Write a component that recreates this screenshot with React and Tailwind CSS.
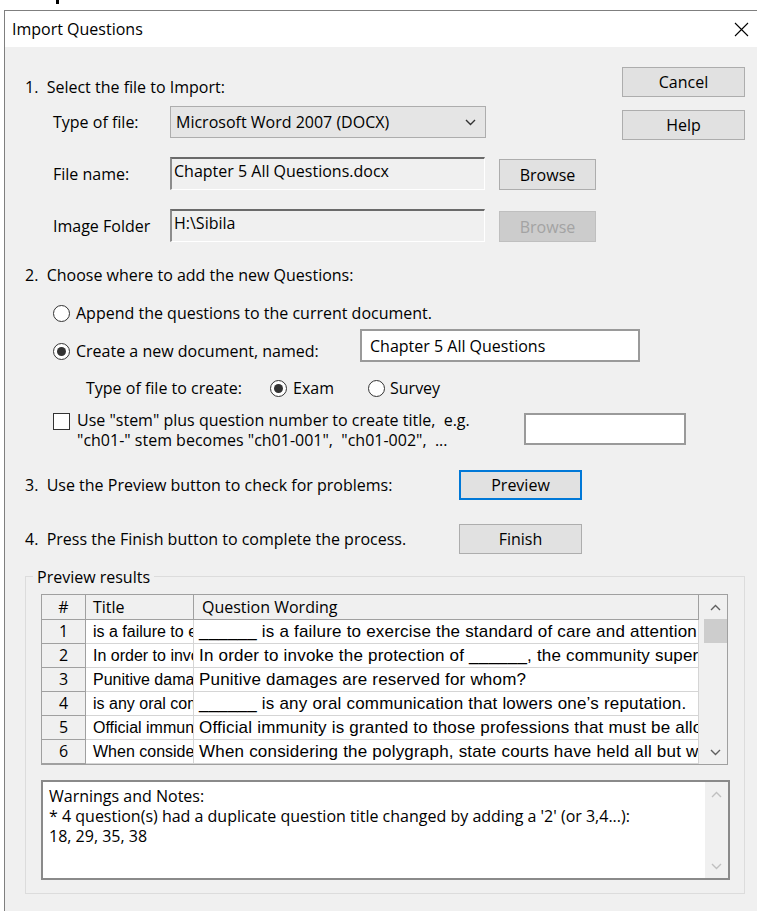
import React from "react";

const rows = [
  ["1", "is a failure to exercise", "______ is a failure to exercise the standard of care and attention to others"],
  ["2", "In order to invoke the protection", "In order to invoke the protection of ______, the community supervisor"],
  ["3", "Punitive damages are reserved", "Punitive damages are reserved for whom?"],
  ["4", "is any oral communication", "______ is any oral communication that lowers one’s reputation."],
  ["5", "Official immunity is granted", "Official immunity is granted to those professions that must be allowed"],
  ["6", "When considering the polygraph", "When considering the polygraph, state courts have held all but which"],
];

function Chevron({ up = false, className = "" }) {
  return (
    <svg width="11" height="7" viewBox="0 0 11 7" className={className}>
      <path
        d={up ? "M1 6 5.5 1.5 10 6" : "M1 1 5.5 5.5 10 1"}
        fill="none"
        stroke="currentColor"
        strokeWidth="1.4"
      />
    </svg>
  );
}

function Btn({ children, className = "", variant = "normal" }) {
  const look =
    variant === "disabled"
      ? "border border-[#bfbfbf] bg-[#cccccc] text-[#a3a3a3]"
      : variant === "focus"
        ? "border-2 border-[#0078d7] bg-[#e1e1e1]"
        : "border border-[#adadad] bg-[#e1e1e1]";
  return (
    <button type="button" className={`flex items-center justify-center ${look} ${className}`}>
      {children}
    </button>
  );
}

function Radio({ checked = false }) {
  return (
    <span className="flex h-[17px] w-[17px] shrink-0 items-center justify-center rounded-full border border-[#333] bg-white">
      {checked && <span className="h-[9px] w-[9px] rounded-full bg-[#333]" />}
    </span>
  );
}

// sunken read-only edit box
function ReadOnlyBox({ value }) {
  return (
    <div className="h-[33px] w-[315px] border-b border-l-2 border-r border-t-2 border-b-white border-l-[#8c8c8c] border-r-white border-t-[#6a6a6a] bg-[#f0f0f0] pl-[2px] pt-[2px] whitespace-nowrap">
      {value}
    </div>
  );
}

export default function App() {
  return (
    <div className="h-[911px] w-[757px] overflow-hidden bg-white font-['Open_Sans',sans-serif] text-[16px] leading-[20px] text-black">
      <div className="h-[10px]">
        <div className="ml-[56px] h-[4px] w-[3px] bg-black" />
      </div>

      <div className="ml-[4px] flex h-[901px] flex-col border-l border-t border-[#7f7f7f]">
        {/* title bar */}
        <div className="flex h-[36px] shrink-0 items-center justify-between bg-white pl-[7px] pr-[8px]">
          <span>Import Questions</span>
          <svg width="15" height="15" viewBox="0 0 15 15">
            <path d="M1 1 14 14M14 1 1 14" stroke="#000" strokeWidth="1.1" />
          </svg>
        </div>

        <div className="flex-1 bg-[#f0f0f0] pl-[20px] pr-[12px]">
          {/* step 1 */}
          <div className="flex justify-between">
            <div>
              <div className="mt-[30px] h-[20px] whitespace-pre">1.  Select the file to Import:</div>

              <div className="mt-[9px] flex h-[32px] items-center pl-[28px]">
                <span className="w-[117px]">Type of file:</span>
                <div className="flex h-[32px] w-[316px] items-center justify-between border border-[#adadad] bg-[#e5e5e5] pl-[5px] pr-[9px]">
                  <span>Microsoft Word 2007 (DOCX)</span>
                  <Chevron className="text-[#333]" />
                </div>
              </div>

              <div className="mt-[19px] flex h-[33px] items-center pl-[28px]">
                <span className="w-[117px]">File name:</span>
                <ReadOnlyBox value="Chapter 5 All Questions.docx" />
                <Btn className="ml-[14px] h-[31px] w-[97px] self-end">Browse</Btn>
              </div>

              <div className="mt-[19px] flex h-[33px] items-center pl-[28px]">
                <span className="w-[117px]">Image Folder</span>
                <ReadOnlyBox value="H:\Sibila" />
                <Btn variant="disabled" className="ml-[14px] h-[31px] w-[97px] self-end">
                  Browse
                </Btn>
              </div>
            </div>

            <div className="flex flex-col pt-[20px]">
              <Btn className="h-[30px] w-[123px]">Cancel</Btn>
              <Btn className="mt-[13px] h-[30px] w-[123px]">Help</Btn>
            </div>
          </div>

          {/* step 2 */}
          <div className="mt-[23px] h-[20px] whitespace-pre">2.  Choose where to add the new Questions:</div>

          <div className="mt-[18px] flex h-[20px] items-center gap-[6px] pl-[28px]">
            <Radio />
            <span>Append the questions to the current document.</span>
          </div>

          <div className="mt-[6px] flex items-start pl-[28px]">
            <div className="mt-[12px] flex h-[20px] w-[307px] items-center gap-[6px]">
              <Radio checked />
              <span>Create a new document, named:</span>
            </div>
            <div className="flex h-[33px] w-[280px] items-center border-2 border-[#9a9a9a] bg-white pl-[8px]">
              Chapter 5 All Questions
            </div>
          </div>

          <div className="mt-[16px] flex h-[20px] items-center pl-[61px]">
            <span className="w-[184px]">Type of file to create:</span>
            <div className="flex w-[98px] items-center gap-[6px]">
              <Radio checked />
              <span>Exam</span>
            </div>
            <div className="flex items-center gap-[5px]">
              <Radio />
              <span>Survey</span>
            </div>
          </div>

          <div className="mt-[12px] flex items-start pl-[28px]">
            <span className="mt-[3px] h-[17px] w-[17px] shrink-0 border border-[#333] bg-white" />
            <div className="ml-[7px] w-[447px] whitespace-pre">
              <div>Use "stem" plus question number to create title,  e.g.</div>
              <div>"ch01-" stem becomes "ch01-001",  "ch01-002",  ...</div>
            </div>
            <div className="mt-[3px] h-[32px] w-[162px] border-2 border-[#9a9a9a] bg-white" />
          </div>

          {/* steps 3 and 4 */}
          <div className="mt-[20px] flex h-[30px] items-center">
            <span className="w-[434px] whitespace-pre">3.  Use the Preview button to check for problems:</span>
            <Btn variant="focus" className="h-[30px] w-[123px]">Preview</Btn>
          </div>

          <div className="mt-[24px] flex h-[30px] items-center">
            <span className="w-[434px] whitespace-pre">4.  Press the Finish button to complete the process.</span>
            <Btn className="h-[30px] w-[123px]">Finish</Btn>
          </div>

          {/* preview results group */}
          <div className="mt-[22px] h-[318px] w-[720px] border border-[#dcdcdc]">
            <div className="-mt-[10px] ml-[7px] w-fit bg-[#f0f0f0] px-[4px]">Preview results</div>

            <div className="ml-[15px] mt-[7px] flex h-[171px] w-[687px] border border-[#a0a0a0] bg-white">
              <div className="flex w-[657px] flex-col">
                <div className="flex h-[25px] shrink-0 border-b border-[#a0a0a0] bg-[#f0f0f0] leading-[24px]">
                  <div className="w-[44px] border-r border-[#a0a0a0] text-center">#</div>
                  <div className="w-[108px] border-r border-[#a0a0a0] pl-[7px]">Title</div>
                  <div className="w-[505px] border-r border-[#a0a0a0] pl-[8px]">Question Wording</div>
                </div>
                {rows.map(([n, title, text]) => (
                  <div key={n} className="flex h-[24px] shrink-0">
                    <div className="w-[44px] border-b border-r border-[#a0a0a0] bg-[#f0f0f0] text-center leading-[23px]">
                      {n}
                    </div>
                    <div className="w-[108px] overflow-hidden whitespace-nowrap border-b border-r border-[#d5d5d5] pl-[7px] font-['Liberation_Sans',Arial,sans-serif] text-[16px] leading-[23px]">
                      {title}
                    </div>
                    <div className="w-[505px] overflow-hidden whitespace-nowrap border-b border-r border-[#d5d5d5] pl-[5px] font-['Liberation_Sans',Arial,sans-serif] text-[17px] leading-[23px] tracking-[0.2px]">
                      {text}
                    </div>
                  </div>
                ))}
              </div>

              {/* grid scrollbar */}
              <div className="flex w-[28px] flex-col bg-[#f0f0f0] pl-[5px]">
                <div className="flex h-[24px] items-center justify-center text-[#606060]">
                  <Chevron up />
                </div>
                <div className="h-[24px] bg-[#cdcdcd]" />
                <div className="flex-1" />
                <div className="flex h-[24px] items-center justify-center text-[#606060]">
                  <Chevron />
                </div>
              </div>
            </div>

            <div className="ml-[15px] mt-[15px] flex h-[100px] w-[689px] border-2 border-[#8a8a8a] bg-white">
              <div className="flex-1 pl-[6px] pt-[4px]">
                <div>Warnings and Notes:</div>
                <div>* 4 question(s) had a duplicate question title changed by adding a '2' (or 3,4...):</div>
                <div>18, 29, 35, 38</div>
              </div>
              <div className="flex w-[23px] flex-col justify-between bg-[#f0f0f0] text-[#c0c0c0]">
                <div className="flex h-[24px] items-center justify-center">
                  <Chevron up />
                </div>
                <div className="flex h-[24px] items-center justify-center">
                  <Chevron />
                </div>
              </div>
            </div>
          </div>
        </div>
      </div>
    </div>
  );
}
